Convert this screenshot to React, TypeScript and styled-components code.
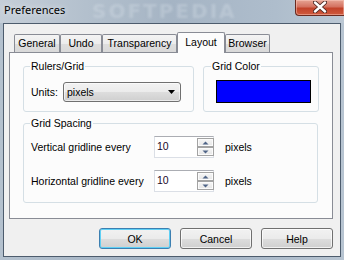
import React from 'react'
import styled, { createGlobalStyle } from 'styled-components'

const GlobalStyle = createGlobalStyle`
  html, body {
    margin: 0;
    padding: 0;
    background: #fff;
  }
  * { box-sizing: border-box; }
`

const uiFont = `'Liberation Sans', Arial, sans-serif`

const tabs = [
  { label: 'General', width: 46 },
  { label: 'Undo', width: 42 },
  { label: 'Transparency', width: 75 },
  { label: 'Layout', width: 48, active: true },
  { label: 'Browser', width: 45 },
]

const spacingRows = [
  { label: 'Vertical gridline every', value: '10' },
  { label: 'Horizontal gridline every', value: '10' },
]

function UpArrow() {
  return (
    <svg width="7" height="4" viewBox="0 0 7 4">
      <path d="M0.5 3.5 L3.5 0.5 L6.5 3.5 Z" fill="#4f6487" />
    </svg>
  )
}

function DownArrow() {
  return (
    <svg width="7" height="4" viewBox="0 0 7 4">
      <path d="M0.5 0.5 L6.5 0.5 L3.5 3.5 Z" fill="#4f6487" />
    </svg>
  )
}

export default function App() {
  return (
    <>
      <GlobalStyle />
      <Window>
        <TitleBar>
          <Title>Preferences</Title>
          <Watermark>SOFTPEDIA</Watermark>
          <CloseButton>
            <svg width="14" height="12" viewBox="0 0 14 12">
              <path
                d="M2 1.5 L12 10.5 M12 1.5 L2 10.5"
                stroke="#4a2620"
                strokeWidth="4.2"
                strokeLinecap="round"
              />
              <path
                d="M2 1.5 L12 10.5 M12 1.5 L2 10.5"
                stroke="#ffffff"
                strokeWidth="2.4"
                strokeLinecap="round"
              />
            </svg>
          </CloseButton>
        </TitleBar>

        <Client>
          <TabStrip>
            {tabs.map(t => (
              <Tab key={t.label} $w={t.width} $active={!!t.active}>
                {t.label}
              </Tab>
            ))}
          </TabStrip>

          <Panel>
            <GroupRow>
              <Group $w={171} $pad="9px 11px 9px 7px">
                <Legend>Rulers/Grid</Legend>
                <UnitsRow>
                  <FieldLabel $w={32}>Units:</FieldLabel>
                  <Combo>
                    <span>pixels</span>
                    <svg width="7" height="4" viewBox="0 0 7 4">
                      <path d="M0 0 L7 0 L3.5 4 Z" fill="#000" />
                    </svg>
                  </Combo>
                </UnitsRow>
              </Group>

              <Group $w={116} $pad="7px 9px 8px 10px" $legendShift={-3}>
                <Legend>Grid Color</Legend>
                <ColorSwatch $color="#0000ff" />
              </Group>
            </GroupRow>

            <Group $pad="6px 7px 10px 7px" $gapTop={5}>
              <Legend>Grid Spacing</Legend>
              <SpacingList>
                {spacingRows.map(r => (
                  <SpacingRow key={r.label}>
                    <FieldLabel $w={123}>{r.label}</FieldLabel>
                    <SpinBox>
                      <SpinValue>{r.value}</SpinValue>
                      <SpinColumn>
                        <SpinButton><UpArrow /></SpinButton>
                        <SpinButton><DownArrow /></SpinButton>
                      </SpinColumn>
                    </SpinBox>
                    <Unit>pixels</Unit>
                  </SpacingRow>
                ))}
              </SpacingList>
            </Group>
          </Panel>

          <ButtonRow>
            <DialogButton $default>OK</DialogButton>
            <DialogButton>Cancel</DialogButton>
            <DialogButton>Help</DialogButton>
          </ButtonRow>
        </Client>
      </Window>
    </>
  )
}

const Window = styled.div`
  width: 344px;
  height: 260px;
  display: flex;
  flex-direction: column;
  overflow: hidden;
  background: linear-gradient(90deg, #b4c1ce 0%, #a3b3c4 40%, #a9b8c8 70%, #b7c4d1 100%);
  font-family: ${uiFont};
  font-size: 10.5px;
  color: #000;
`

const TitleBar = styled.div`
  position: relative;
  height: 23px;
  flex: none;
  display: flex;
  align-items: flex-start;
  background: linear-gradient(90deg, #c5ced8 0%, #b3c0cd 25%, #a5b4c4 50%, #aebdcc 80%, #bcc8d4 100%);
`

const Title = styled.div`
  padding-left: 4px;
  line-height: 20px;
  font-family: 'Noto Sans', 'Open Sans', sans-serif;
  font-size: 11px;
  color: #000;
  text-shadow: 0 0 6px rgba(255, 255, 255, 0.8);
  position: relative;
  z-index: 1;
`

const Watermark = styled.div`
  position: absolute;
  left: 92px;
  top: 0;
  line-height: 22px;
  font-family: 'DejaVu Sans', sans-serif;
  font-weight: bold;
  font-size: 20px;
  letter-spacing: 2px;
  color: rgba(225, 232, 240, 0.28);
  filter: blur(1.2px);
  pointer-events: none;
`

const CloseButton = styled.div`
  margin-left: auto;
  width: 49px;
  height: 16px;
  display: flex;
  align-items: center;
  justify-content: center;
  padding-bottom: 1px;
  border: 1px solid #6a2a1f;
  border-top: none;
  border-right: none;
  border-radius: 0 0 0 4px;
  background: linear-gradient(180deg, #e6a493 0%, #d47260 45%, #c2432a 55%, #cf5a3d 100%);
  box-shadow: inset 0 0 0 1px rgba(255, 210, 200, 0.45);
  position: relative;
  z-index: 1;
`

const Client = styled.div`
  flex: 1;
  margin: 0 3px 3px;
  border: 1px solid #4d5c6d;
  background: #f0f0f0;
  padding: 8px 7px 7px 5px;
  display: flex;
  flex-direction: column;
`

const TabStrip = styled.div`
  display: flex;
  align-items: flex-start;
  height: 21px;
  padding-left: 5px;
  margin-bottom: -1px;
  position: relative;
  z-index: 1;
`

const Tab = styled.div<{ $w: number; $active: boolean }>`
  width: ${p => p.$w}px;
  height: ${p => (p.$active ? 21 : 18)}px;
  margin-top: ${p => (p.$active ? 0 : 2)}px;
  border: 1px solid #898c95;
  border-bottom: none;
  border-radius: 2px 2px 0 0;
  background: ${p =>
    p.$active ? '#fcfcfc' : 'linear-gradient(180deg, #f4f4f4 0%, #ececec 50%, #dedede 51%, #d9d9d9 100%)'};
  text-align: center;
  line-height: ${p => (p.$active ? 18 : 17)}px;
  white-space: nowrap;
  position: relative;
  z-index: ${p => (p.$active ? 2 : 1)};
`

const Panel = styled.div`
  flex: 1;
  border: 1px solid #898c95;
  background: #fcfcfc;
  padding: 7px 14px 13px 13px;
  display: flex;
  flex-direction: column;
`

const GroupRow = styled.div`
  display: flex;
  gap: 9px;
`

const Group = styled.fieldset<{ $w?: number; $pad: string; $gapTop?: number; $legendShift?: number }>`
  margin: ${p => p.$gapTop || 0}px 0 0;
  width: ${p => (p.$w ? `${p.$w}px` : 'auto')};
  flex: none;
  min-width: 0;
  padding: ${p => p.$pad};
  border: 1px solid #d5dfe5;
  border-radius: 3px;

  legend {
    margin-left: ${p => p.$legendShift ?? -1}px;
  }
`

const Legend = styled.legend`
  padding: 0 1px;
  line-height: 13px;
  font-size: 10.5px;
`

const UnitsRow = styled.div`
  display: flex;
  align-items: center;
`

const FieldLabel = styled.span<{ $w: number }>`
  width: ${p => p.$w}px;
  flex: none;
  white-space: nowrap;
`

const Combo = styled.div`
  width: 118px;
  height: 20px;
  display: flex;
  align-items: center;
  justify-content: space-between;
  padding: 0 5px 0 3px;
  border: 1px solid #707070;
  border-radius: 3px;
  background: linear-gradient(180deg, #f2f2f2 0%, #ebebeb 50%, #dddddd 51%, #cfcfcf 100%);
  box-shadow: inset 0 0 0 1px rgba(255, 255, 255, 0.6);
`

const ColorSwatch = styled.div<{ $color: string }>`
  width: 95px;
  height: 23px;
  margin-left: 2px;
  border: 1px solid #000;
  background: ${p => p.$color};
`

const SpacingList = styled.div`
  display: flex;
  flex-direction: column;
  gap: 12px;
`

const SpacingRow = styled.div`
  display: flex;
  align-items: center;
`

const SpinBox = styled.div`
  width: 60px;
  height: 22px;
  flex: none;
  display: flex;
  border: 1px solid #dbdfe6;
  border-top-color: #abadb3;
  background: #fff;
`

const SpinValue = styled.span`
  flex: 1;
  padding-left: 2px;
  line-height: 18px;
  color: #1a0a2a;
`

const SpinColumn = styled.div`
  width: 17px;
  display: flex;
  flex-direction: column;
  padding: 1px 0;
  margin-right: -1px;
`

const SpinButton = styled.div`
  flex: 1;
  display: flex;
  align-items: center;
  justify-content: center;
  border: 1px solid #a3a3a3;
  background: linear-gradient(180deg, #f6f6f6 0%, #e6e6e6 100%);
  box-shadow: inset 0 0 0 1px #fbfbfb;
`

const Unit = styled.span`
  margin-left: 11px;
`

const ButtonRow = styled.div`
  display: flex;
  justify-content: flex-end;
  gap: 9px;
  margin-top: 9px;
`

const DialogButton = styled.div<{ $default?: boolean }>`
  width: 72px;
  height: 21px;
  display: flex;
  align-items: center;
  justify-content: center;
  border: 1px solid ${p => (p.$default ? '#3c7fb1' : '#707070')};
  border-radius: 3px;
  background: linear-gradient(180deg, #f2f2f2 0%, #ebebeb 50%, #dddddd 51%, #cfcfcf 100%);
  box-shadow: inset 0 0 0 1px ${p => (p.$default ? '#5fd0f5' : 'rgba(255, 255, 255, 0.7)')};
`
